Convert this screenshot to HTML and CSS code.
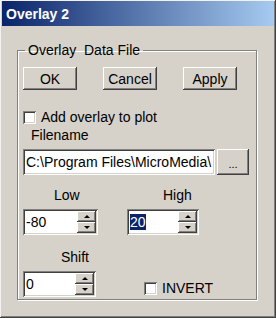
FILE: index.html
```html
<!DOCTYPE html>
<html lang="en">
<head>
  <meta charset="UTF-8">
  <title>Overlay 2</title>
  <link rel="stylesheet" href="styles.css">
</head>
<body>

  <div class="window">
    <div class="titlebar">Overlay 2</div>

    <fieldset class="group">
      <legend>Overlay&nbsp; Data File</legend>

      <div class="btn-row">
        <button class="btn">OK</button>
        <button class="btn">Cancel</button>
        <button class="btn">Apply</button>
      </div>

      <label class="check-row add-row"><span class="checkbox"></span>Add overlay to plot</label>

      <div class="field-label">Filename</div>
      <div class="file-row">
        <div class="edit file-edit">C:\Program Files\MicroMedia\</div>
        <button class="btn browse">...</button>
      </div>

      <div class="spin-row">
        <div class="spin-field low">
          <div class="spin-label">Low</div>
          <div class="spin">
            <div class="spin-value">-80</div>
            <div class="spin-buttons">
              <span class="spin-btn"><span class="arrow up"></span></span>
              <span class="spin-btn"><span class="arrow down"></span></span>
            </div>
          </div>
        </div>
        <div class="spin-field high">
          <div class="spin-label">High</div>
          <div class="spin">
            <div class="spin-value"><span class="selected">20</span></div>
            <div class="spin-buttons">
              <span class="spin-btn"><span class="arrow up"></span></span>
              <span class="spin-btn"><span class="arrow down"></span></span>
            </div>
          </div>
        </div>
      </div>

      <div class="spin-row shift-row">
        <div class="spin-field shift">
          <div class="spin-label">Shift</div>
          <div class="spin">
            <div class="spin-value">0</div>
            <div class="spin-buttons">
              <span class="spin-btn"><span class="arrow up"></span></span>
              <span class="spin-btn"><span class="arrow down"></span></span>
            </div>
          </div>
        </div>
        <label class="check-row invert"><span class="checkbox"></span>INVERT</label>
      </div>
    </fieldset>
  </div>

</body>
</html>
```

FILE: styles.css
```css
* {
  box-sizing: border-box;
}
body {
  margin: 0;
  font-family: "Liberation Sans", Arial, sans-serif;
  font-size: 14px;
  line-height: 16px;
  color: #000;
}
.window {
  width: 276px;
  height: 318px;
  padding: 1px 2px 2px 2px;
  background: #d6d2ca;
  box-shadow: inset -1px -1px #404040, inset 1px 1px #f4f2ee, inset -2px -2px #808080;
}
.titlebar {
  height: 25px;
  padding: 5px 0 0 4px;
  background: linear-gradient(to right, #0a246a, #a6caf0);
  color: #fff;
  font-weight: bold;
}
.group {
  width: 240px;
  margin: 16px 0 0 15px;
  padding: 9px 5px 2px 5px;
  border: 1px solid #808080;
  box-shadow: 1px 1px 0 #fff, inset 1px 1px 0 #fff;
}
.group legend {
  margin-left: 2px;
  padding: 0 3px;
}
.btn {
  font: inherit;
  color: #000;
  background: #d6d2ca;
  border: none;
  padding: 0;
  box-shadow: inset -1px -1px #404040, inset 1px 1px #fff, inset -2px -2px #808080;
}
.btn-row {
  display: flex;
  gap: 26px;
}
.btn-row .btn {
  width: 54px;
  height: 23px;
}
.check-row {
  display: flex;
  align-items: center;
  gap: 5px;
  height: 16px;
}
.add-row {
  margin-top: 19px;
}
.checkbox {
  width: 13px;
  height: 13px;
  background: #fff;
  box-shadow: inset 1px 1px #808080, inset -1px -1px #fff, inset 2px 2px #404040, inset -2px -2px #d6d2ca;
}
.field-label {
  margin-top: 2px;
  padding-left: 8px;
}
.file-row {
  display: flex;
  gap: 2px;
  margin-top: 6px;
  height: 26px;
}
.edit {
  background: #fff;
  box-shadow: inset 1px 1px #808080, inset -1px -1px #fff, inset 2px 2px #404040, inset -2px -2px #d6d2ca;
}
.file-edit {
  width: 192px;
  padding: 5px 0 0 3px;
  white-space: nowrap;
  overflow: hidden;
}
.browse {
  width: 32px;
  font-size: 11px;
  line-height: 11px;
  padding-top: 4px;
}
.spin-row {
  display: flex;
  margin-top: 12px;
}
.shift-row {
  margin-top: 14px;
  align-items: flex-end;
}
.spin-label {
  margin-bottom: 6px;
}
.low .spin-label {
  padding-left: 31px;
}
.high .spin-label {
  padding-left: 36px;
}
.shift .spin-label {
  padding-left: 38px;
}
.high {
  margin-left: 29px;
}
.spin {
  display: flex;
  height: 26px;
  padding: 2px;
  background: #fff;
  box-shadow: inset 1px 1px #808080, inset -1px -1px #fff, inset 2px 2px #404040, inset -2px -2px #d6d2ca;
}
.low .spin {
  width: 75px;
}
.high .spin {
  width: 72px;
}
.shift .spin {
  width: 73px;
}
.spin-value {
  flex: 1;
  padding: 3px 0 0 1px;
}
.selected {
  background: #0a246a;
  color: #fff;
}
.spin-buttons {
  display: flex;
  flex-direction: column;
  width: 19px;
}
.spin-btn {
  flex: 1;
  display: flex;
  align-items: center;
  justify-content: center;
  background: #d6d2ca;
  box-shadow: inset -1px -1px #404040, inset 1px 1px #fff, inset -2px -2px #808080;
}
.arrow {
  width: 0;
  height: 0;
  border-left: 3px solid transparent;
  border-right: 3px solid transparent;
}
.arrow.up {
  border-bottom: 3px solid #000;
}
.arrow.down {
  border-top: 3px solid #000;
}
.invert {
  margin: 0 0 1px 48px;
}
```
